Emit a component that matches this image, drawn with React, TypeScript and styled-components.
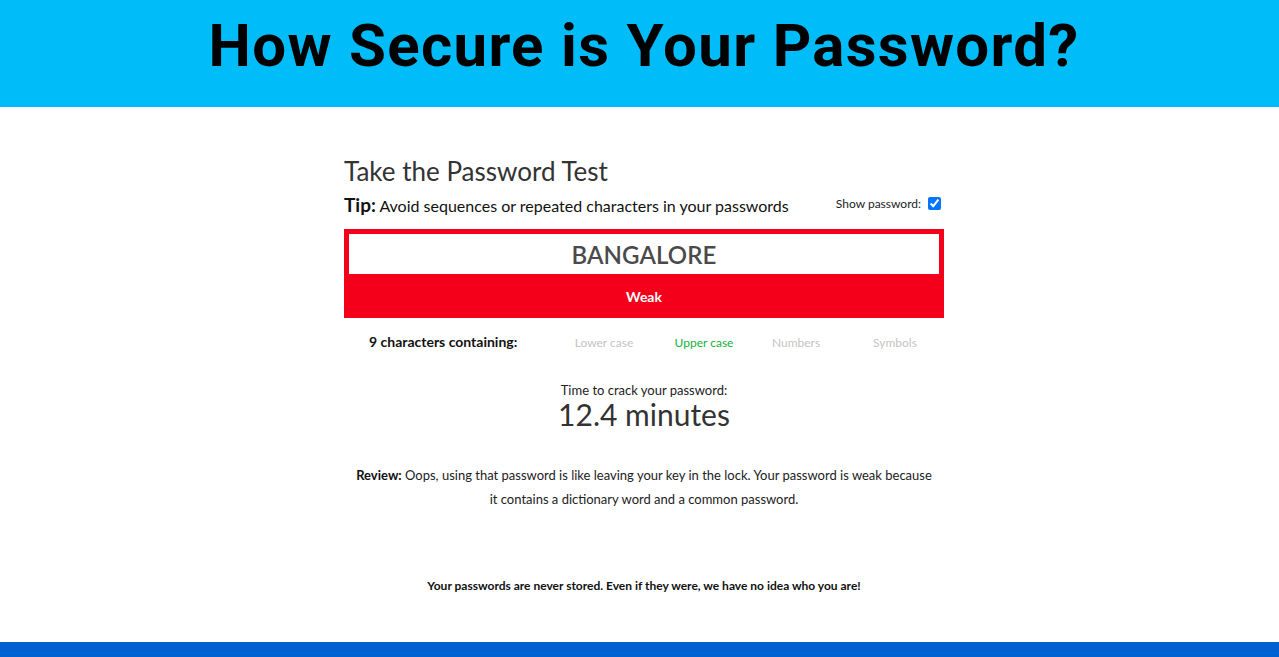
import React from "react";
import styled, { createGlobalStyle } from "styled-components";

const GlobalStyle = createGlobalStyle`
  html, body {
    margin: 0;
    padding: 0;
    background: #fff;
  }
  body {
    font-family: Lato, "Open Sans", sans-serif;
    color: #333;
  }
`;

const Page = styled.div`
  min-height: 657px;
  display: flex;
  flex-direction: column;
`;

const Header = styled.header`
  height: 107px;
  background: #00bdf9;
  display: flex;
  justify-content: center;
  align-items: flex-start;
  padding-left: 9px;
`;

const Title = styled.h1`
  margin: 13px 0 0;
  font-family: Roboto, "Liberation Sans", Arial, sans-serif;
  font-weight: 700;
  font-size: 60px;
  letter-spacing: 1.3px;
  line-height: 66px;
  color: #000;
`;

const Main = styled.main`
  flex: 1;
  width: 600px;
  margin: 0 auto;
  padding: 49px 0 0 9px;
  display: flex;
  flex-direction: column;
`;

const TestHeading = styled.h2`
  margin: 0;
  font-size: 26px;
  font-weight: 400;
  line-height: 30px;
  color: #333;
`;

const TipRow = styled.div`
  margin-top: 5px;
  display: flex;
  align-items: center;
  justify-content: space-between;
  height: 26px;
`;

const Tip = styled.p`
  margin: 0;
  font-size: 16px;
  color: #111;
  b {
    font-size: 19px;
    font-weight: 700;
  }
`;

const ShowLabel = styled.label`
  font-size: 12px;
  color: #222;
  display: flex;
  align-items: center;
  gap: 7px;
  margin-right: 3px;
  margin-top: -2px;
  input {
    margin: 0;
    width: 13px;
    height: 13px;
    accent-color: #0075ff;
  }
`;

const Meter = styled.div`
  margin-top: 12px;
  background: #f5001b;
  padding: 5px 5px 0;
`;

const PasswordInput = styled.div`
  height: 40px;
  background: #fff;
  display: flex;
  align-items: center;
  justify-content: center;
  font-size: 24px;
  font-weight: 600;
  color: #4a4a4a;
  letter-spacing: 0.1px;
`;

const Strength = styled.div`
  height: 44px;
  display: flex;
  align-items: center;
  justify-content: center;
  color: #fff;
  font-size: 14px;
  font-weight: 700;
`;

const CharRow = styled.div`
  margin-top: 13px;
  display: grid;
  grid-template-columns: 212px 96px 104px 80px 118px;
  align-items: center;
  height: 20px;
`;

const CharCount = styled.span`
  font-size: 14px;
  font-weight: 700;
  color: #111;
  padding-left: 25px;
`;

const CharType = styled.span<{ $on?: boolean }>`
  font-size: 12px;
  text-align: center;
  color: ${(p) => (p.$on ? "#12b13c" : "#c4c4c4")};
  padding-top: 2px;
`;

const Crack = styled.div`
  margin-top: 31px;
  display: flex;
  flex-direction: column;
  align-items: center;
`;

const CrackLabel = styled.span`
  font-size: 13px;
  color: #222;
  line-height: 16px;
`;

const CrackTime = styled.span`
  font-size: 30px;
  color: #333;
  line-height: 32px;
`;

const Review = styled.p`
  margin: 33px 0 0;
  padding: 0 10px;
  text-align: center;
  font-size: 13px;
  line-height: 24px;
  color: #222;
  b {
    font-weight: 700;
    color: #111;
  }
`;

const Note = styled.p`
  margin: 67px 0 0;
  text-align: center;
  font-size: 12px;
  font-weight: 700;
  color: #111;
`;

const Footer = styled.footer`
  margin-top: auto;
  height: 15px;
  background: #0062d0;
`;

export default function App() {
  return (
    <Page>
      <GlobalStyle />
      <Header>
        <Title>How Secure is Your Password?</Title>
      </Header>
      <Main>
        <TestHeading>Take the Password Test</TestHeading>
        <TipRow>
          <Tip>
            <b>Tip:</b> Avoid sequences or repeated characters in your passwords
          </Tip>
          <ShowLabel>
            Show password: <input type="checkbox" defaultChecked />
          </ShowLabel>
        </TipRow>
        <Meter>
          <PasswordInput>BANGALORE</PasswordInput>
          <Strength>Weak</Strength>
        </Meter>
        <CharRow>
          <CharCount>9 characters containing:</CharCount>
          <CharType>Lower case</CharType>
          <CharType $on>Upper case</CharType>
          <CharType>Numbers</CharType>
          <CharType>Symbols</CharType>
        </CharRow>
        <Crack>
          <CrackLabel>Time to crack your password:</CrackLabel>
          <CrackTime>12.4 minutes</CrackTime>
        </Crack>
        <Review>
          <b>Review:</b> Oops, using that password is like leaving your key in the lock. Your password is weak because
          it contains a dictionary word and a common password.
        </Review>
        <Note>Your passwords are never stored. Even if they were, we have no idea who you are!</Note>
      </Main>
      <Footer />
    </Page>
  );
}
